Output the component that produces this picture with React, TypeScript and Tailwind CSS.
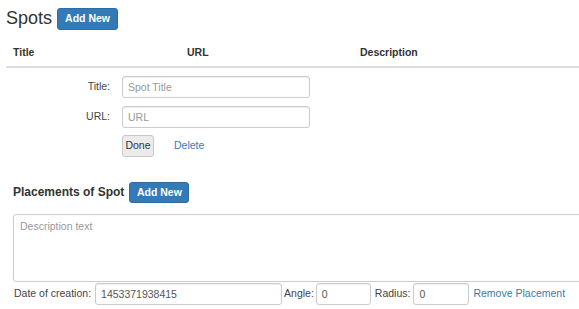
import { FC } from "react";

const inputCls =
  "h-[22px] border border-[#ccc] rounded-[3px] px-[5px] text-[10.5px] text-[#555] placeholder:text-[#999] outline-none bg-white shadow-[inset_0_1px_1px_rgba(0,0,0,0.075)]";

const App: FC = () => {
  return (
    <div className="w-[579px] h-[309px] overflow-hidden bg-white font-['Liberation_Sans',Arial,sans-serif] text-[10.5px] text-[#333]">
      <div className="pl-[6px]">
        {/* Heading */}
        <div className="flex items-center gap-[5px] pt-[8px]">
          <h1 className="text-[18px] leading-[22px] -mt-[2px] text-[#333]">Spots</h1>
          <button className="w-[61px] h-[22px] rounded-[3px] bg-[#337ab7] border border-[#2e6da4] text-white font-bold text-[10.5px]">
            Add New
          </button>
        </div>

        {/* Table header */}
        <div className="mt-[10px] h-[28px] flex items-center border-b-2 border-[#ddd] font-bold">
          <div className="w-[174px] pl-[7px]">Title</div>
          <div className="w-[173px] pl-[7px]">URL</div>
          <div className="flex-1 pl-[7px]">Description</div>
        </div>

        {/* Spot form */}
        <div className="mt-[8px] flex flex-col">
          <div className="flex items-center">
            <label className="w-[104px] text-right text-[#444]">Title:</label>
            <input className={`ml-[12px] w-[188px] ${inputCls}`} placeholder="Spot Title" />
          </div>
          <div className="flex items-center mt-[8px]">
            <label className="w-[104px] text-right text-[#444]">URL:</label>
            <input className={`ml-[12px] w-[188px] ${inputCls}`} placeholder="URL" />
          </div>
          <div className="flex items-center mt-[7px]">
            <button className="ml-[116px] w-[32px] h-[22px] rounded-[3px] bg-[#ebebeb] border border-[#c8c8c8] text-[#333]">
              Done
            </button>
            <a className="ml-[20px] text-[#337ab7] cursor-pointer">Delete</a>
          </div>
        </div>

        {/* Placements */}
        <div className="pl-[7px]">
          <div className="mt-[25px] flex items-center gap-[5px]">
            <h2 className="text-[12px] font-bold leading-[21px] text-[#333]">Placements of Spot</h2>
            <button className="w-[60px] h-[21px] rounded-[3px] bg-[#337ab7] border border-[#2e6da4] text-white font-bold text-[10.5px]">
              Add New
            </button>
          </div>
          <textarea
            className="mt-[11px] block w-[600px] h-[68px] border border-[#ccc] rounded-[3px] px-[6px] pt-[5px] text-[10.5px] leading-[13px] text-[#555] placeholder:text-[#999] resize-none outline-none"
            placeholder="Description text"
          />
          <div className="mt-[1px] flex items-center text-[#444]">
            <span className="ml-[1px]">Date of creation:</span>
            <input className={`ml-[4px] w-[187px] ${inputCls}`} defaultValue="1453371938415" />
            <span className="ml-[2px]">Angle:</span>
            <input className={`ml-[2px] w-[55px] ${inputCls}`} defaultValue="0" />
            <span className="ml-[4px]">Radius:</span>
            <input className={`ml-[3px] w-[56px] ${inputCls}`} defaultValue="0" />
            <a className="ml-[4px] text-[#337ab7] cursor-pointer">Remove Placement</a>
          </div>
        </div>
      </div>
    </div>
  );
};

export default App;
